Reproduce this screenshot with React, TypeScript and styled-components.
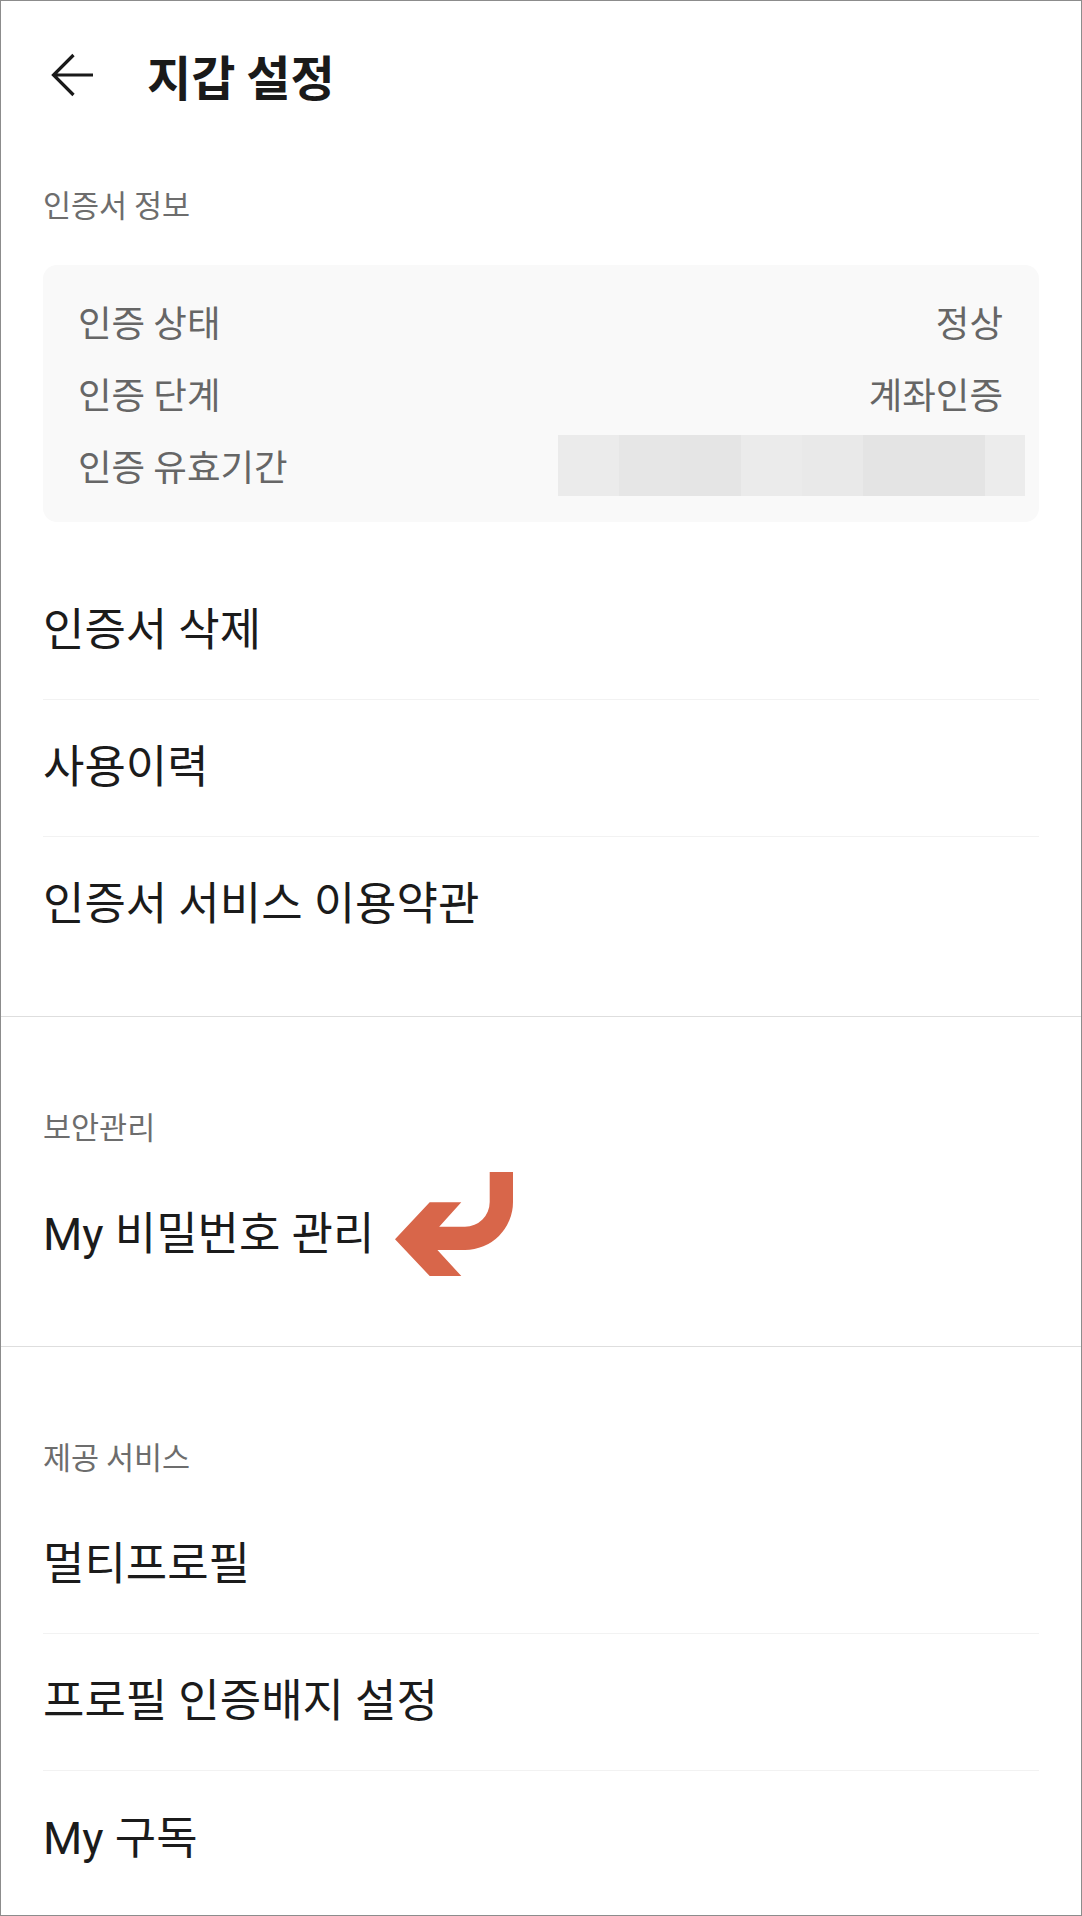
import styled, { createGlobalStyle } from "styled-components";

const GlobalStyle = createGlobalStyle`
  * {
    box-sizing: border-box;
  }
  body {
    margin: 0;
    background: #ffffff;
    font-family: Roboto, "Noto Sans CJK KR", sans-serif;
  }
`;

const Screen = styled.div`
  width: 1082px;
  height: 1916px;
  border: 1px solid #8c8c8c;
  background: #ffffff;
  overflow: hidden;
`;

const AppBar = styled.header`
  height: 147px;
  display: flex;
  align-items: center;
  gap: 53px;
  padding-left: 50px;
`;

const BackButton = styled.button`
  display: flex;
  width: 43px;
  height: 44px;
  padding: 0;
  border: 0;
  background: none;
  cursor: pointer;
`;

const Title = styled.h1`
  margin: 0;
  font-family: "Noto Sans CJK KR", sans-serif;
  font-size: 48px;
  font-weight: 700;
  line-height: 1;
  color: #1a1a1a;
`;

const Section = styled.section<{ $last?: boolean }>`
  padding: 0 42px ${({ $last }) => ($last ? 0 : 43)}px;
  border-bottom: ${({ $last }) => ($last ? "none" : "1px solid #dedede")};
`;

const SectionLabel = styled.h2<{ $first?: boolean }>`
  margin: 0 0 ${({ $first }) => ($first ? 46 : 26)}px;
  padding-top: ${({ $first }) => ($first ? 41 : 94)}px;
  font-family: "Noto Sans CJK KR", sans-serif;
  font-size: 30.5px;
  font-weight: 400;
  line-height: 30px;
  color: #6d6d6d;
`;

const InfoCard = styled.div`
  margin-bottom: 41px;
  padding: 20px 36px 21px 35px;
  border-radius: 14px;
  background: #f9f9f9;
`;

const InfoRow = styled.div`
  display: flex;
  align-items: center;
  justify-content: space-between;
  height: 72px;
  font-family: "Noto Sans CJK KR", sans-serif;
  font-size: 36.5px;
  color: #666666;
`;

const Masked = styled.div`
  display: flex;
  height: 61px;
  margin-right: -22px;
`;

const MaskCell = styled.span<{ $tone: string; $w: number }>`
  width: ${({ $w }) => $w}px;
  height: 100%;
  background: ${({ $tone }) => $tone};
`;

const MenuList = styled.nav`
  display: flex;
  flex-direction: column;
`;

const MenuItem = styled.a`
  display: flex;
  align-items: center;
  height: 137px;
  border-bottom: 1px solid #f2f2f2;
  font-size: 45px;
  line-height: 1.2;
  color: #1b1b1b;
  text-decoration: none;

  &:last-child {
    height: 136px;
    border-bottom: none;
  }
`;

const Label = styled.span`
  position: relative;
`;

const Pointer = styled.svg`
  position: absolute;
  left: calc(100% + 21px);
  top: calc(50% - 63px);
`;

const maskCells = [
  { w: 61, tone: "#ebebeb" },
  { w: 61, tone: "#e6e6e6" },
  { w: 61, tone: "#e5e5e5" },
  { w: 61, tone: "#ebebeb" },
  { w: 61, tone: "#e9e9e9" },
  { w: 61, tone: "#e4e4e4" },
  { w: 61, tone: "#e4e4e4" },
  { w: 40, tone: "#ececec" },
];

function BackIcon() {
  return (
    <svg width="43" height="44" viewBox="0 0 43 44" fill="none">
      <path
        d="M42 22H2.5M22.5 2L2.5 22L22.5 42"
        stroke="#1a1a1a"
        strokeWidth="3.2"
        strokeLinejoin="miter"
      />
    </svg>
  );
}

function CurvedArrow() {
  return (
    <Pointer width="118" height="104" viewBox="0 0 118 104">
      <path
        d="M94.7 0H118V30A48 48 0 0 1 70 78H42.4L66.3 104H34.7L0 67.2L34.7 30.3H66.3L44.2 54.7H70A24.7 24.7 0 0 0 94.7 30Z"
        fill="#d8664a"
      />
    </Pointer>
  );
}

function App() {
  return (
    <>
      <GlobalStyle />
      <Screen>
        <AppBar>
          <BackButton aria-label="뒤로">
            <BackIcon />
          </BackButton>
          <Title>지갑 설정</Title>
        </AppBar>

        <Section>
          <SectionLabel $first>인증서 정보</SectionLabel>
          <InfoCard>
            <InfoRow>
              <span>인증 상태</span>
              <span>정상</span>
            </InfoRow>
            <InfoRow>
              <span>인증 단계</span>
              <span>계좌인증</span>
            </InfoRow>
            <InfoRow>
              <span>인증 유효기간</span>
              <Masked>
                {maskCells.map((cell, i) => (
                  <MaskCell key={i} $w={cell.w} $tone={cell.tone} />
                ))}
              </Masked>
            </InfoRow>
          </InfoCard>
          <MenuList>
            <MenuItem href="#">인증서 삭제</MenuItem>
            <MenuItem href="#">사용이력</MenuItem>
            <MenuItem href="#">인증서 서비스 이용약관</MenuItem>
          </MenuList>
        </Section>

        <Section>
          <SectionLabel>보안관리</SectionLabel>
          <MenuList>
            <MenuItem href="#">
              <Label>
                My 비밀번호 관리
                <CurvedArrow />
              </Label>
            </MenuItem>
          </MenuList>
        </Section>

        <Section $last>
          <SectionLabel>제공 서비스</SectionLabel>
          <MenuList>
            <MenuItem href="#">멀티프로필</MenuItem>
            <MenuItem href="#">프로필 인증배지 설정</MenuItem>
            <MenuItem href="#">My 구독</MenuItem>
          </MenuList>
        </Section>
      </Screen>
    </>
  );
}

export default App;
